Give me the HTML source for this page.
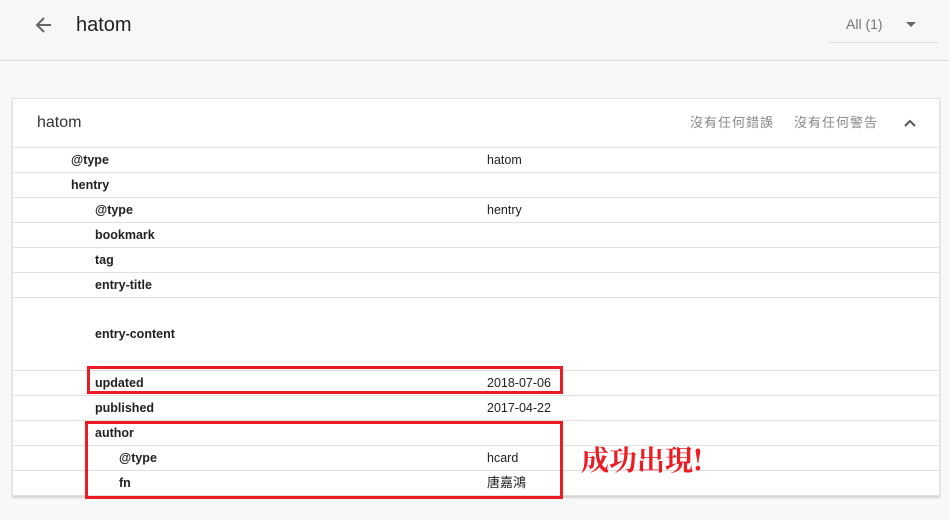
<!DOCTYPE html>
<html><head><meta charset="utf-8"><style>
*{margin:0;padding:0;box-sizing:border-box}
body{width:949px;height:520px;background:#f8f8f8;font-family:"Liberation Sans","Noto Sans CJK TC",sans-serif;position:relative;overflow:hidden;color:#212121}
.hdr{position:absolute;left:0;top:0;width:949px;height:61px;border-bottom:1px solid #dcdcdc;background:#f7f7f7}
.t{position:absolute;left:76px;top:14px;font-size:20px;line-height:22px;color:#222}
.all{position:absolute;left:846px;top:16px;font-size:14px;color:#757575}
.dd{position:absolute;left:829px;top:42px;width:109px;height:1px;background:#ddd}
.card{position:absolute;left:12px;top:98px;width:928px;height:398px;background:#fff;border:1px solid #e0e0e0;box-shadow:0 2px 2px rgba(0,0,0,.15)}
.ch{position:absolute;left:24px;top:14px;font-size:16px;line-height:20px;color:#333}
.st{position:absolute;top:15px;font-size:13px;line-height:18px;color:#888;letter-spacing:1px}
.row{position:absolute;left:0;width:926px;border-top:1px solid #e0e0e0;font-size:12.5px;line-height:15px}
.row b{position:absolute;top:5px}
.row span{position:absolute;left:474px;top:5px}
.box{position:absolute;border:3px solid #ec1c24}
.big{position:absolute;left:581px;top:441px;font-family:"Noto Serif CJK SC",serif;font-weight:bold;font-size:28px;line-height:36px;color:#ec1c24}
</style></head><body>
<div class="hdr">
<svg style="position:absolute;left:34px;top:15px" width="20" height="20" viewBox="0 0 20 20"><path d="M17 10H4M10 3L3 10l7 7" stroke="#666" stroke-width="2" fill="none"/></svg>
<div class="t">hatom</div>
<div class="all">All (1)</div>
<svg style="position:absolute;left:905px;top:21px" width="12" height="8"><path d="M1 1h10L6 6z" fill="#666"/></svg>
<div class="dd"></div>
</div>
<div class="card">
<div class="ch">hatom</div>
<div class="st" style="left:677px">沒有任何錯誤</div>
<div class="st" style="left:781px">沒有任何警告</div>
<svg style="position:absolute;left:891px;top:20px" width="12" height="8"><path d="M1 7l5-5 5 5" stroke="#555" stroke-width="2" fill="none"/></svg>
<div class="row" style="top:48px;height:25px"><b style="left:58px">@type</b><span>hatom</span></div>
<div class="row" style="top:73px;height:25px"><b style="left:58px">hentry</b></div>
<div class="row" style="top:98px;height:25px"><b style="left:82px">@type</b><span>hentry</span></div>
<div class="row" style="top:123px;height:25px"><b style="left:82px">bookmark</b></div>
<div class="row" style="top:148px;height:25px"><b style="left:82px">tag</b></div>
<div class="row" style="top:173px;height:25px"><b style="left:82px">entry-title</b></div>
<div class="row" style="top:198px;height:73px"><b style="left:82px;top:29px">entry-content</b></div>
<div class="row" style="top:271px;height:25px"><b style="left:82px">updated</b><span>2018-07-06</span></div>
<div class="row" style="top:296px;height:25px"><b style="left:82px">published</b><span>2017-04-22</span></div>
<div class="row" style="top:321px;height:25px"><b style="left:82px">author</b></div>
<div class="row" style="top:346px;height:25px"><b style="left:106px">@type</b><span>hcard</span></div>
<div class="row" style="top:371px;height:25px"><b style="left:106px">fn</b><span style="top:4px;font-size:13px">唐嘉鴻</span></div>
</div>
<div class="box" style="left:87px;top:366px;width:476px;height:28px"></div>
<div class="box" style="left:85px;top:421px;width:478px;height:78px"></div>
<div class="big">成功出現!</div>
</body></html>
